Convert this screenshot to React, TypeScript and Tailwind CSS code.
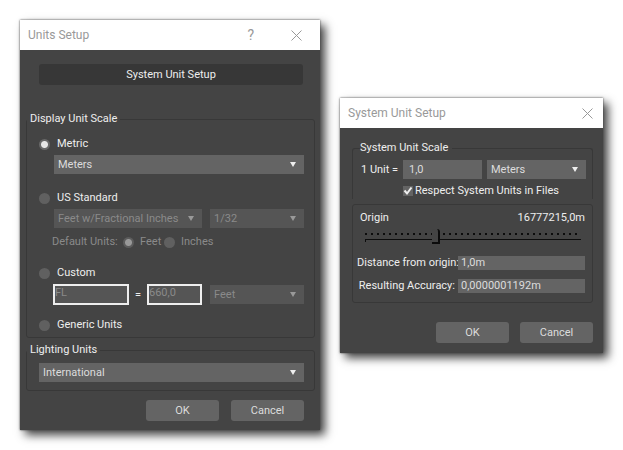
import { useState } from "react";
import type { ReactNode } from "react";
import clsx from "clsx";

type DropdownProps = {
    label: string;
    options: string[];
    disabled?: boolean;
    className?: string;
}

function Dropdown({ label, options, disabled = false, className = "" }: DropdownProps) {
    return (
        <div className={clsx("relative", className)}>
            <select
                aria-label={label}
                disabled={disabled}
                className={clsx(
                    "block h-[19px] w-full appearance-none pr-4 pl-1 opacity-100 outline-none",
                    disabled ? "bg-[#555555] text-[#8a8a8a]" : "bg-[#646464] text-[#dcdcdc]"
                )}
            >
                {options.map((o) => <option key={o}>{o}</option>)}
            </select>
            <svg
                viewBox="0 0 6 5"
                className={clsx("pointer-events-none absolute top-[7px] right-2 h-[5px] w-[6px]", disabled ? "text-[#999999]" : "text-[#eeeeee]")}
            >
                <path d="M0 0h6L3 5z" fill="currentColor" />
            </svg>
        </div>
    )
}

type RadioProps = {
    name: string;
    label: string;
    checked: boolean;
    disabled?: boolean;
    className?: string;
    onChange: () => void;
}

function Radio({ name, label, checked, disabled = false, className = "gap-[7px]", onChange }: RadioProps) {
    return (
        <label className={clsx("flex h-4 items-center", disabled && "text-[#8a8a8a]", className)}>
            <input
                type="radio"
                name={name}
                checked={checked}
                disabled={disabled}
                onChange={onChange}
                className={clsx(
                    "size-[11px] shrink-0 appearance-none rounded-full bg-[#606060]",
                    disabled ? "checked:bg-[radial-gradient(circle,#999999_3px,#5c5c5c_4px)]" : "checked:bg-[radial-gradient(circle,#e6e6e6_3px,#686868_4px)]"
                )}
            />
            <span className="whitespace-nowrap">{label}</span>
        </label>
    )
}

function Button({ children }: { children: ReactNode }) {
    return (
        <button type="button" className="h-[21px] w-[73px] rounded-[3px] bg-[#646464] text-[#dcdcdc]">
            {children}
        </button>
    )
}

type DialogProps = {
    title: string;
    help?: boolean;
    children: ReactNode;
}

function Dialog({ title, help = false, children }: DialogProps) {
    return (
        <section aria-label={title} className="min-w-0 bg-[#444444] shadow-[0_0_2px_#444444,5px_5px_9px_rgba(0,0,0,0.75)]">
            <header className={clsx("flex h-[30px] items-center bg-white pl-2 text-[#999999]", help ? "pr-[13px]" : "pr-[5px]")}>
                <h1 className="flex-1 text-[12px] whitespace-nowrap">{title}</h1>
                {
                    help && <button type="button" aria-label="Help" className="mr-8 text-[14px]">?</button>
                }
                <button type="button" aria-label="Close" className="p-[5px]">
                    <svg viewBox="0 0 11 11" className="size-[11px]" fill="none" stroke="currentColor">
                        <path d="M.5.5l10 10M10.5.5l-10 10" />
                    </svg>
                </button>
            </header>
            {children}
        </section>
    )
}

const groupClass = "min-w-0 rounded-[3px] border border-[#383838]";
const legendClass = "-ml-3 h-4 px-[3px]";
const fieldClass = "min-w-0 outline-none";

function UnitsSetup() {
    const [scale, setScale] = useState("metric");
    const [defaultUnit, setDefaultUnit] = useState("feet");

    return (
        <Dialog title="Units Setup" help>
            <div className="pt-[14px] pr-[5px] pb-[9px] pl-[6px]">
                <div className="pr-3 pl-[13px]">
                    <button type="button" className="h-[21px] w-full rounded-[3px] bg-[#373737] text-[#eeeeee]">System Unit Setup</button>
                </div>

                <fieldset className={clsx(groupClass, "mt-[26px] pt-[9px] pr-[10px] pb-1 pl-3")}>
                    <legend className={legendClass}>Display Unit Scale</legend>
                    <Radio name="scale" label="Metric" checked={scale === "metric"} onChange={() => setScale("metric")} />
                    <Dropdown label="Metric unit" options={["Meters", "Centimeters", "Kilometers"]} className="mt-[3px] ml-[15px]" />

                    <Radio name="scale" label="US Standard" checked={scale === "us"} onChange={() => setScale("us")} className="mt-4 gap-[7px]" />
                    <div className="mt-[3px] ml-[15px] flex gap-2">
                        <Dropdown label="US unit" options={["Feet w/Fractional Inches"]} disabled className="min-w-0 flex-1" />
                        <Dropdown label="Fraction" options={["1/32"]} disabled className="w-[94px]" />
                    </div>
                    <div className="mt-[6px] ml-[13px] flex text-[#8a8a8a]">
                        <span className="w-[71px] whitespace-nowrap">Default Units:</span>
                        <Radio name="default" label="Feet" disabled checked={defaultUnit === "feet"} onChange={() => setDefaultUnit("feet")} className="w-[41px] gap-[6px]" />
                        <Radio name="default" label="Inches" disabled checked={defaultUnit === "inches"} onChange={() => setDefaultUnit("inches")} className="gap-[6px]" />
                    </div>

                    <Radio name="scale" label="Custom" checked={scale === "custom"} onChange={() => setScale("custom")} className="mt-[15px] gap-[7px]" />
                    <div className="mt-[3px] ml-[14px] flex items-center">
                        <input aria-label="Custom unit name" defaultValue="FL" disabled className={clsx(fieldClass, "h-[21px] flex-1 border-2 border-[#eeeeee] bg-[#555555] pb-1 text-[#8a8a8a]")} />
                        <span className="w-[18px] text-center">=</span>
                        <input aria-label="Custom unit value" defaultValue="660,0" disabled className={clsx(fieldClass, "mr-2 h-[21px] w-[55px] border-2 border-[#eeeeee] bg-[#555555] pb-1 text-[#8a8a8a]")} />
                        <Dropdown label="Custom unit base" options={["Feet"]} disabled className="w-[94px]" />
                    </div>

                    <Radio name="scale" label="Generic Units" checked={scale === "generic"} onChange={() => setScale("generic")} className="mt-3 gap-[7px]" />
                </fieldset>

                <fieldset className={clsx(groupClass, "mt-1 pt-[5px] pr-[10px] pb-2 pl-3")}>
                    <legend className={legendClass}>Lighting Units</legend>
                    <Dropdown label="Lighting Units" options={["International", "American"]} />
                </fieldset>

                <div className="mt-[9px] flex justify-end gap-3 pr-[11px]">
                    <Button>OK</Button>
                    <Button>Cancel</Button>
                </div>
            </div>
        </Dialog>
    )
}

function SystemUnitSetup() {
    const [origin, setOrigin] = useState(32);

    return (
        <Dialog title="System Unit Setup">
            <div className="pt-3 pr-[10px] pb-[10px] pl-3">
                <fieldset className={clsx(groupClass, "rounded-b-none border-b-0 pt-1 pr-[6px] pb-0 pl-2")}>
                    <legend className="-ml-px h-4 pr-1">System Unit Scale</legend>
                    <div className="flex items-center">
                        <label htmlFor="unit" className="w-[42px] whitespace-nowrap">1 Unit =</label>
                        <input id="unit" defaultValue="1,0" className={clsx(fieldClass, "h-[19px] flex-1 bg-[#646464] px-[6px] text-[#dcdcdc]")} />
                        <Dropdown label="System unit" options={["Meters", "Centimeters"]} className="ml-[5px] w-[99px]" />
                    </div>
                    <label className="mt-1 ml-[42px] flex h-4 items-center gap-[2px] whitespace-nowrap">
                        <span className="grid size-[10px]">
                            <input type="checkbox" defaultChecked className="peer col-start-1 row-start-1 size-[10px] appearance-none bg-[#646464]" />
                            <svg viewBox="0 0 10 10" className="pointer-events-none col-start-1 row-start-1 size-[10px] opacity-0 peer-checked:opacity-100" fill="none" stroke="#eeeeee" strokeWidth="2">
                                <path d="M1.500 4.500l2.500 3L8.500 1.500" />
                            </svg>
                        </span>
                        Respect System Units in Files
                    </label>
                </fieldset>

                <fieldset className={clsx(groupClass, "mt-[5px] pt-[5px] pr-[7px] pb-2 pl-1")}>
                    <div className="flex justify-between pl-[3px]">
                        <label htmlFor="origin">Origin</label>
                        <output htmlFor="origin">16777215,0m</output>
                    </div>
                    <input
                        id="origin"
                        type="range"
                        value={origin}
                        onChange={(e) => setOrigin(Number(e.target.value))}
                        className="ml-2 block h-[19px] w-[calc(100%-12px)] appearance-none bg-[linear-gradient(90deg,#0c0c0c_2px,transparent_2px)] bg-[length:6px_2px] bg-[position:0_7px] bg-repeat-x outline-none [&::-webkit-slider-runnable-track]:mt-[9px] [&::-webkit-slider-runnable-track]:h-[3px] [&::-webkit-slider-runnable-track]:border-t [&::-webkit-slider-runnable-track]:border-l [&::-webkit-slider-runnable-track]:border-[#0c0c0c] [&::-webkit-slider-thumb]:mt-[-11px] [&::-webkit-slider-thumb]:h-[15px] [&::-webkit-slider-thumb]:w-[8px] [&::-webkit-slider-thumb]:appearance-none [&::-webkit-slider-thumb]:rounded-t-[3px] [&::-webkit-slider-thumb]:border-r-2 [&::-webkit-slider-thumb]:border-b-2 [&::-webkit-slider-thumb]:border-[#0c0c0c] [&::-webkit-slider-thumb]:bg-[#444444]"
                    />
                    <div className="mt-[10px] flex items-center">
                        <label htmlFor="distance" className="w-[101px] pr-[3px] text-right whitespace-nowrap">Distance from origin:</label>
                        <input id="distance" defaultValue="1,0m" className={clsx(fieldClass, "h-[14px] flex-1 bg-[#646464] px-[3px] text-[#dcdcdc]")} />
                    </div>
                    <div className="mt-[7px] flex items-center">
                        <label htmlFor="accuracy" className="w-[101px] pr-[3px] text-right whitespace-nowrap">Resulting Accuracy:</label>
                        <input id="accuracy" defaultValue="0,0000001192m" className={clsx(fieldClass, "h-[14px] flex-1 bg-[#646464] px-[3px] text-[#dcdcdc]")} />
                    </div>
                </fieldset>

                <div className="mt-[19px] flex justify-end gap-[11px]">
                    <Button>OK</Button>
                    <Button>Cancel</Button>
                </div>
            </div>
        </Dialog>
    )
}

export default function App() {
    return (
        <main className="min-h-screen bg-white p-5 font-[Roboto,sans-serif] text-[11px] leading-4 text-[#eeeeee]">
            <div className="grid grid-cols-[300fr_263fr] items-start gap-5">
                <UnitsSetup />
                <div className="mt-[78px] min-w-0">
                    <SystemUnitSetup />
                </div>
            </div>
        </main>
    )
}
